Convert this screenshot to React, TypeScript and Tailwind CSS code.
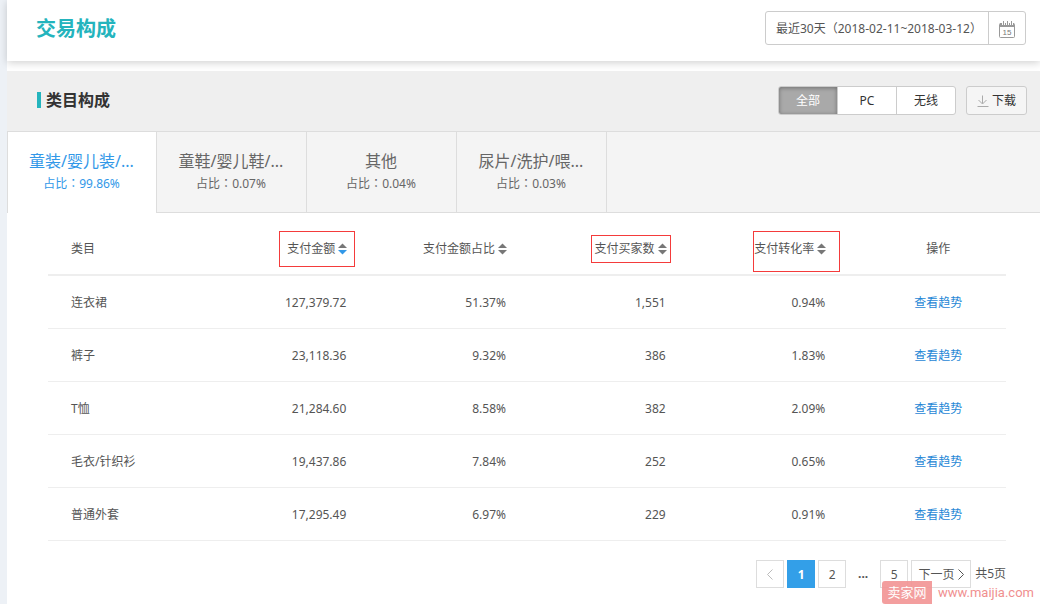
import { useState } from "react"

interface Category {
    name: string
    ratio: string
}

interface Row {
    name: string
    amount: string
    share: string
    buyers: string
    rate: string
}

interface SortHeaderProps {
    label: string
    active?: boolean
    mark?: string
}

const categories: Category[] = [
    { name: "童装/婴儿装/...", ratio: "99.86%" },
    { name: "童鞋/婴儿鞋/...", ratio: "0.07%" },
    { name: "其他", ratio: "0.04%" },
    { name: "尿片/洗护/喂...", ratio: "0.03%" },
]

const rows: Row[] = [
    { name: "连衣裙", amount: "127,379.72", share: "51.37%", buyers: "1,551", rate: "0.94%" },
    { name: "裤子", amount: "23,118.36", share: "9.32%", buyers: "386", rate: "1.83%" },
    { name: "T恤", amount: "21,284.60", share: "8.58%", buyers: "382", rate: "2.09%" },
    { name: "毛衣/针织衫", amount: "19,437.86", share: "7.84%", buyers: "252", rate: "0.65%" },
    { name: "普通外套", amount: "17,295.49", share: "6.97%", buyers: "229", rate: "0.91%" },
]

const platforms = ["全部", "PC", "无线"]

const CalendarIcon = () => (
    <svg width="16" height="17" viewBox="0 0 16 17" fill="none" aria-hidden="true">
        <path d="M1 2h14v4H1z" fill="#999" />
        <rect x="0.5" y="2.5" width="15" height="14" rx="1" stroke="#999" />
        <path d="M4.5 0v4M8.5 0v4M12.5 0v4" stroke="#fff" strokeWidth="3" />
        <path d="M4.5 0v4M8.5 0v4M12.5 0v4" stroke="#999" />
        <text x="8" y="14" fontSize="8" textAnchor="middle" fill="#777" fontFamily="Liberation Sans, sans-serif">15</text>
    </svg>
)

const DownloadIcon = () => (
    <svg width="12" height="12" viewBox="0 0 12 12" fill="none" stroke="#aaa" aria-hidden="true">
        <path d="M5.5 0.5v8M1.5 5l4 4 4-4M0.5 11.5h11" />
    </svg>
)

const SortIcon = ({ active }: { active?: boolean }) => (
    <svg width="9" height="12" viewBox="0 0 9 12" aria-hidden="true">
        <path d="M4.5 0.5L9 5H0z" fill="#777" />
        <path d="M4.5 11.5L9 7H0z" fill={active ? "#3298e8" : "#777"} />
    </svg>
)

// centred full-width punctuation
const Punct = ({ children }: { children: string }) => (
    <span className="font-['Noto_Sans_CJK_TC',sans-serif]">{children}</span>
)

const SortHeader: React.FC<SortHeaderProps> = ({ label, active, mark }) => {
    return (
        <th className="pr-5 pt-2.5 text-right font-normal">
            <button className="relative inline-flex items-center gap-[3px] whitespace-nowrap align-middle">
                {label}
                <SortIcon active={active} />
                {mark && <span className={`absolute border border-[#f43b3b] ${mark}`}></span>}
            </button>
        </th>
    )
}

const App: React.FC = () => {
    const [platform, setPlatform] = useState("全部")
    const [tab, setTab] = useState(0)

    return (
        <div className="relative min-h-screen overflow-hidden bg-[#edf1f6] pl-[7px] font-['Noto_Sans','Noto_Sans_CJK_SC',sans-serif] text-xs text-[#555]">
            <div className="min-h-screen bg-white">
                <header className="relative flex h-[61px] items-start justify-between bg-white pl-[29px] pr-[14px] pt-[11px] shadow-[0_2px_8px_rgba(0,0,0,0.18)]">
                    <h1 className="pt-0.5 text-xl leading-8 font-bold text-[#24b4bd]">交易构成</h1>
                    <div className="flex h-[34px] rounded-[3px] border border-[#ccc]">
                        <button className="min-w-[223px] border-r border-[#ccc] pl-2.5 text-left whitespace-nowrap">
                            最近30天<Punct>（</Punct>2018-02-11~2018-03-12<Punct>）</Punct>
                        </button>
                        <button aria-label="选择日期" className="flex w-9 items-center justify-center pt-[3px]">
                            <CalendarIcon />
                        </button>
                    </div>
                </header>

                <section className="mt-2.5">
                    <div className="flex h-[60px] items-center justify-between bg-[#efefef] pb-0.5 pl-[30px] pr-[13px]">
                        <h2 className="flex items-center gap-[5px] text-base leading-6 font-bold text-[#333]">
                            <span className="h-4 w-1 bg-[#24b4bd]"></span>
                            类目构成
                        </h2>
                        <div className="flex gap-2.5 text-[#333]">
                            <div className="flex h-[29px] overflow-hidden rounded-[3px] border border-[#ccc] bg-white">
                                {platforms.map((item) => (
                                    <button
                                        key={item}
                                        onClick={() => setPlatform(item)}
                                        className={`w-[59px] border-r border-[#ccc] pt-px last:w-[58px] last:border-r-0 ${
                                            platform === item ? "bg-[#a9a9a9] text-white shadow-[inset_0_1px_4px_rgba(0,0,0,0.35)]" : ""
                                        }`}
                                    >
                                        {item}
                                    </button>
                                ))}
                            </div>
                            <button className="flex h-[29px] items-center gap-[3px] rounded-[3px] border border-[#ccc] bg-[#f5f5f5] px-2.5 pt-px">
                                <DownloadIcon />
                                下载
                            </button>
                        </div>
                    </div>

                    <div className="flex h-[82px] border-y border-[#ddd] bg-[#f4f4f4]">
                        {categories.map((item, index) => (
                            <button
                                key={item.name}
                                onClick={() => setTab(index)}
                                className={`w-[150px] border-r border-[#ddd] pr-px pb-0.5 ${
                                    tab === index ? "-mb-px border-l bg-white text-[#3298e8]" : "text-[#666]"
                                }`}
                            >
                                <span className="block text-base leading-6">{item.name}</span>
                                <span className="block leading-5">
                                    占比<Punct>：</Punct>{item.ratio}
                                </span>
                            </button>
                        ))}
                    </div>

                    <div className="pl-[41px] pr-[34px]">
                        <table className="w-full table-fixed border-collapse">
                            <thead>
                                <tr className="h-[62px] border-b-2 border-[#eee]">
                                    <th className="pl-[23px] pt-2.5 text-left font-normal">类目</th>
                                    <SortHeader label="支付金额" active mark="-inset-x-2 -inset-y-2.5" />
                                    <SortHeader label="支付金额占比" />
                                    <SortHeader label="支付买家数" mark="-inset-x-1 -inset-y-1.5" />
                                    <SortHeader label="支付转化率" mark="-left-px -right-3.5 -top-2.5 -bottom-[15px]" />
                                    <th className="pl-6 pt-2.5 text-center font-normal">操作</th>
                                </tr>
                            </thead>
                            <tbody>
                                {rows.map((row) => (
                                    <tr key={row.name} className="h-[53px] border-b border-[#eee]">
                                        <td className="pl-[23px] pt-0.5">{row.name}</td>
                                        <td className="pr-[21px] pt-0.5 text-right">{row.amount}</td>
                                        <td className="pr-[21px] pt-0.5 text-right">{row.share}</td>
                                        <td className="pr-[21px] pt-0.5 text-right">{row.buyers}</td>
                                        <td className="pr-[21px] pt-0.5 text-right">{row.rate}</td>
                                        <td className="pl-6 pt-0.5 text-center">
                                            <a href="#" className="text-[#1f87d6]">查看趋势</a>
                                        </td>
                                    </tr>
                                ))}
                            </tbody>
                        </table>

                        <nav className="flex items-center justify-end gap-[3px] pt-[19px]">
                            <button aria-label="上一页" className="flex h-7 w-7 items-center justify-center border border-[#ddd] pt-0.5">
                                <svg width="6" height="11" viewBox="0 0 6 11" fill="none" stroke="#bbb"><path d="M5.5 0.5l-5 5 5 5" /></svg>
                            </button>
                            <button className="h-7 w-7 bg-[#339fe8] pt-0.5 font-bold text-white">1</button>
                            <button className="h-7 w-7 border border-[#ddd] pt-0.5">2</button>
                            <span className="w-7 text-center font-bold">...</span>
                            <button className="h-7 w-7 border border-[#ddd] pt-0.5">5</button>
                            <button className="flex h-7 w-[60px] items-center justify-center gap-[3px] border border-[#ddd] pt-0.5">
                                下一页
                                <svg width="6" height="11" viewBox="0 0 6 11" fill="none" stroke="#555"><path d="M0.5 0.5l5 5-5 5" /></svg>
                            </button>
                            <span className="pl-px">共5页</span>
                        </nav>
                    </div>
                </section>
            </div>

            <div className="absolute bottom-0 right-1.5 flex h-[23px] items-center gap-1.5 text-[#f08f8f]">
                <span className="flex h-full w-[50px] items-center justify-center rounded-l-[3px] bg-[#f29393]/90 text-[13px] text-white">卖家网</span>
                <span className="font-['Roboto',sans-serif] text-[13px]">www.maijia.com</span>
            </div>
        </div>
    )
}

export default App
